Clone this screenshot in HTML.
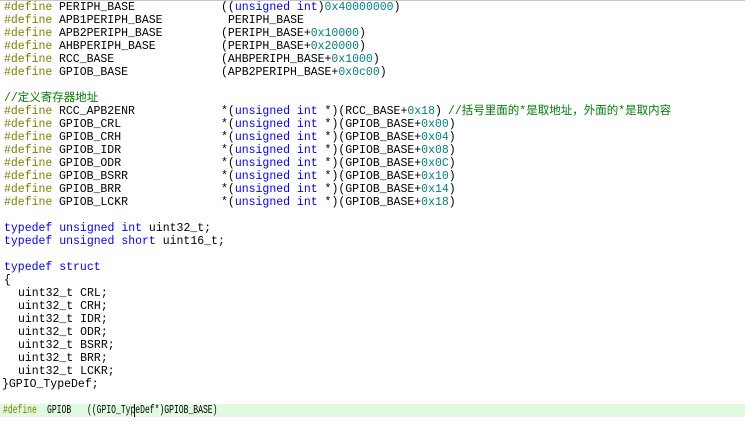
<!DOCTYPE html>
<html><head><meta charset="utf-8"><style>
html,body{margin:0;padding:0;background:#fff;width:745px;height:428px;overflow:hidden}
body{border-top:1px solid #c8c8c8;box-sizing:border-box;position:relative}
.l{position:absolute;left:0;width:745px;height:13px;font:11.5px/13px "Liberation Mono","Noto Sans CJK SC",monospace;color:#000;white-space:pre}
.l span{position:absolute;top:0}
.d{color:#808000}.k{color:#0000ff}.n{color:#008080}.c{color:#008000}
.hl{background:#e0fae0}
.sq{transform:scaleX(0.7);transform-origin:0 0}
</style></head><body>
<div class="l" style="top:0"><span class="d" style="left:4px">#define</span><span style="left:59px">PERIPH_BASE</span><span style="left:221px">((<b class="k" style="font-weight:normal">unsigned int</b>)<b class="n" style="font-weight:normal">0x40000000</b>)</span></div>
<div class="l" style="top:13px"><span class="d" style="left:4px">#define</span><span style="left:59px">APB1PERIPH_BASE</span><span style="left:228px">PERIPH_BASE</span></div>
<div class="l" style="top:26px"><span class="d" style="left:4px">#define</span><span style="left:59px">APB2PERIPH_BASE</span><span style="left:221px">(PERIPH_BASE+<i class="n" style="font-style:normal">0x10000</i>)</span></div>
<div class="l" style="top:39px"><span class="d" style="left:4px">#define</span><span style="left:59px">AHBPERIPH_BASE</span><span style="left:221px">(PERIPH_BASE+<i class="n" style="font-style:normal">0x20000</i>)</span></div>
<div class="l" style="top:52px"><span class="d" style="left:4px">#define</span><span style="left:59px">RCC_BASE</span><span style="left:221px">(AHBPERIPH_BASE+<i class="n" style="font-style:normal">0x1000</i>)</span></div>
<div class="l" style="top:65px"><span class="d" style="left:4px">#define</span><span style="left:59px">GPIOB_BASE</span><span style="left:221px">(APB2PERIPH_BASE+<i class="n" style="font-style:normal">0x0c00</i>)</span></div>
<div class="l" style="top:91px"><span class="c" style="left:4px">//定义寄存器地址</span></div>
<div class="l" style="top:104px"><span class="d" style="left:4px">#define</span><span style="left:59px">RCC_APB2ENR</span><span style="left:221px">*(<i class="k" style="font-style:normal">unsigned int</i> *)(RCC_BASE+<i class="n" style="font-style:normal">0x18</i>)</span><span class="c" style="left:448px">//括号里面的*是取地址，外面的*是取内容</span></div>
<div class="l" style="top:117px"><span class="d" style="left:4px">#define</span><span style="left:59px">GPIOB_CRL</span><span style="left:221px">*(<i class="k" style="font-style:normal">unsigned int</i> *)(GPIOB_BASE+<i class="n" style="font-style:normal">0x00</i>)</span></div>
<div class="l" style="top:130px"><span class="d" style="left:4px">#define</span><span style="left:59px">GPIOB_CRH</span><span style="left:221px">*(<i class="k" style="font-style:normal">unsigned int</i> *)(GPIOB_BASE+<i class="n" style="font-style:normal">0x04</i>)</span></div>
<div class="l" style="top:143px"><span class="d" style="left:4px">#define</span><span style="left:59px">GPIOB_IDR</span><span style="left:221px">*(<i class="k" style="font-style:normal">unsigned int</i> *)(GPIOB_BASE+<i class="n" style="font-style:normal">0x08</i>)</span></div>
<div class="l" style="top:156px"><span class="d" style="left:4px">#define</span><span style="left:59px">GPIOB_ODR</span><span style="left:221px">*(<i class="k" style="font-style:normal">unsigned int</i> *)(GPIOB_BASE+<i class="n" style="font-style:normal">0x0C</i>)</span></div>
<div class="l" style="top:169px"><span class="d" style="left:4px">#define</span><span style="left:59px">GPIOB_BSRR</span><span style="left:221px">*(<i class="k" style="font-style:normal">unsigned int</i> *)(GPIOB_BASE+<i class="n" style="font-style:normal">0x10</i>)</span></div>
<div class="l" style="top:182px"><span class="d" style="left:4px">#define</span><span style="left:59px">GPIOB_BRR</span><span style="left:221px">*(<i class="k" style="font-style:normal">unsigned int</i> *)(GPIOB_BASE+<i class="n" style="font-style:normal">0x14</i>)</span></div>
<div class="l" style="top:195px"><span class="d" style="left:4px">#define</span><span style="left:59px">GPIOB_LCKR</span><span style="left:221px">*(<i class="k" style="font-style:normal">unsigned int</i> *)(GPIOB_BASE+<i class="n" style="font-style:normal">0x18</i>)</span></div>
<div class="l" style="top:221px"><span style="left:4px"><i class="k" style="font-style:normal">typedef unsigned int</i> uint32_t;</span></div>
<div class="l" style="top:234px"><span style="left:4px"><i class="k" style="font-style:normal">typedef unsigned short</i> uint16_t;</span></div>
<div class="l" style="top:260px"><span class="k" style="left:4px">typedef struct</span></div>
<div class="l" style="top:273px"><span style="left:4px">{</span></div>
<div class="l" style="top:286px"><span style="left:18px">uint32_t CRL;</span></div>
<div class="l" style="top:299px"><span style="left:18px">uint32_t CRH;</span></div>
<div class="l" style="top:312px"><span style="left:18px">uint32_t IDR;</span></div>
<div class="l" style="top:325px"><span style="left:18px">uint32_t ODR;</span></div>
<div class="l" style="top:338px"><span style="left:18px">uint32_t BSRR;</span></div>
<div class="l" style="top:351px"><span style="left:18px">uint32_t BRR;</span></div>
<div class="l" style="top:364px"><span style="left:18px">uint32_t LCKR;</span></div>
<div class="l" style="top:377px"><span style="left:2px">}GPIO_TypeDef;</span></div>
<div class="l hl" style="top:403px"><span class="d sq" style="left:3px">#define</span><span class="sq" style="left:47px">GPIOB</span><span class="sq" style="left:87px">((GPIO_TypeDef*)GPIOB_BASE)</span><span style="left:134px;width:1px;height:13px;background:#000"></span></div>
</body></html>
